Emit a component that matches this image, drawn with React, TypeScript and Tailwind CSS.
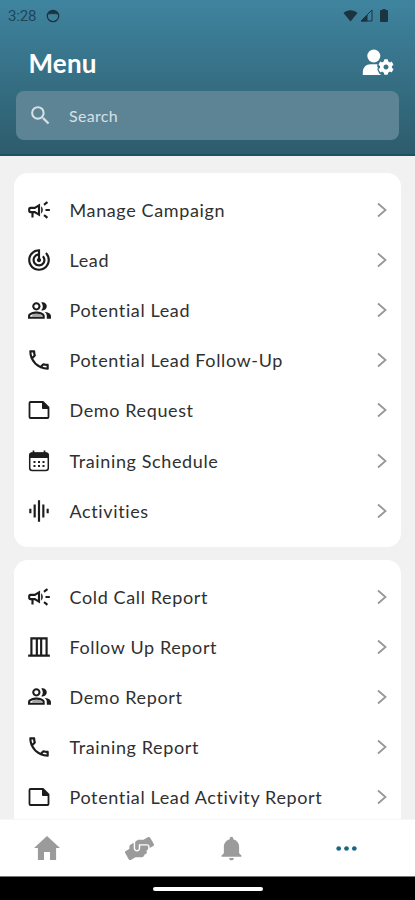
import React from "react";
import {
  MdOutlineCampaign,
  MdTrackChanges,
  MdOutlinePeopleAlt,
  MdOutlinePhone,
  MdOutlineCurtainsClosed,
  MdGraphicEq,
  MdSearch,
} from "react-icons/md";
import { IoEllipsisHorizontal } from "react-icons/io5";
import { IoMdHome, IoMdNotifications } from "react-icons/io";
import { FaHandsHelping, FaCog } from "react-icons/fa";

function NoteIcon() {
  return (
    <svg viewBox="0 0 22 18" className="h-[18px] w-[22px]" fill="none" stroke="currentColor" strokeWidth="1.8" strokeLinejoin="round">
      <path d="M2.500 1H15L20.500 6.500v9.500q0 1-1 1h-17q-1 0-1-1v-14q0-1 1-1z" />
      <path d="M14.500 1.500V7.500h6z" fill="currentColor" strokeWidth="1" />
    </svg>
  );
}

function CalendarIcon() {
  return (
    <svg viewBox="0 0 22 22" className="h-[22px] w-[22px]" fill="none" stroke="currentColor">
      <rect x="1.700" y="3" width="18.600" height="17.600" rx="2.500" strokeWidth="1.500" />
      <path d="M1.500 8V5q0-2.500 2.500-2.500h14q2.500 0 2.500 2.500v3z" fill="currentColor" stroke="none" />
      <path d="M5.500 .5v3M16.500 .5v3" strokeWidth="1.700" />
      <path d="M10 12h2M14.500 12h2M5.500 12h2M5.500 16h2M10 16h2M14.500 16h2" strokeWidth="2" />
    </svg>
  );
}

function UserSettingsIcon() {
  return (
    <span className="relative block h-[27px] w-[32px]">
      <svg viewBox="0 0 32 27" className="h-[27px] w-[32px]" fill="currentColor">
        <circle cx="11.800" cy="7" r="6.500" />
        <path d="M.8 26v-2.500C.8 18.500 4 15.300 8.500 15.300H15.500C14.800 17 15.300 18 16 18.600 15.200 20 15.200 21.500 16.300 22.500 16.600 24 18 25.500 19.500 26z" />
      </svg>
      <FaCog size={16} className="absolute top-[10px] left-[15.500px]" />
    </span>
  );
}

type Item = { label: string; icon: React.ReactNode };

const campaign = <MdOutlineCampaign size={26} />;
const people = (
  <span className="relative">
    <MdOutlinePeopleAlt size={25} />
    <span className="absolute bottom-[6px] left-[5px] h-[3px] w-[10px] rounded-t-full bg-[#a5a5a5]" />
  </span>
);
const phone = <MdOutlinePhone size={26} />;

const mainItems: Item[] = [
  { label: "Manage Campaign", icon: campaign },
  { label: "Lead", icon: <MdTrackChanges size={26} /> },
  { label: "Potential Lead", icon: people },
  { label: "Potential Lead Follow-Up", icon: phone },
  { label: "Demo Request", icon: <NoteIcon /> },
  { label: "Training Schedule", icon: <CalendarIcon /> },
  { label: "Activities", icon: <MdGraphicEq size={26} /> },
];

const reportItems: Item[] = [
  { label: "Cold Call Report", icon: campaign },
  { label: "Follow Up Report", icon: <MdOutlineCurtainsClosed size={26} /> },
  { label: "Demo Report", icon: people },
  { label: "Training Report", icon: phone },
  { label: "Potential Lead Activity Report", icon: <NoteIcon /> },
];

function MenuCard({ items }: { items: Item[] }) {
  return (
    <div className="shrink-0 rounded-[14px] bg-white pt-[12px] pb-[11px]">
      {items.map((item) => (
        <div key={item.label} className="flex h-[50.1px] items-center pr-[13.5px] pl-[12px] text-[#1c1c1c]">
          <span className="flex w-[26px] justify-center">{item.icon}</span>
          <span className="ml-[17.5px] flex-1 text-[18px] leading-6 tracking-[0.62px] whitespace-nowrap text-[#303030]">
            {item.label}
          </span>
          <svg viewBox="0 0 12 16" className="h-4 w-3" fill="none" stroke="#979797" strokeWidth="1.8">
            <path d="M2 1.5 9.500 8l-7.500 6.500" />
          </svg>
        </div>
      ))}
    </div>
  );
}

export default function App() {
  return (
    <div className="flex h-[900px] w-[415px] flex-col overflow-hidden bg-[#f1f1f1] font-['Lato',sans-serif]">
      <header className="h-[156px] shrink-0 border-b-2 border-[#1b5263] bg-linear-to-b from-[#3f849f] to-[#2d5c6c]">
        <div className="flex h-[31px] items-center justify-between pr-[27px] pl-[8px] text-[#1d4657]">
          <div className="flex items-center gap-[10px]">
            <span className="font-['Roboto',sans-serif] text-[15px] leading-5 tracking-[-0.2px]">3:28</span>
            <svg viewBox="0 0 14 14" className="h-[14px] w-[14px] text-[#1b3540]" fill="none" stroke="currentColor" strokeWidth="1.3">
              <circle cx="7" cy="7" r="5.7" />
              <path d="M2 5 4 2h6l2 3-2 .5-1-1-1 1-1-1-1 1-1-1-1 1z" fill="currentColor" stroke="none" />
            </svg>
          </div>
          <div className="flex items-center text-[#1b3540]">
            <svg viewBox="0 0 15 13" className="h-[13px] w-[15px]" fill="currentColor">
              <path d="M.5 4C4.5.2 10.500.2 14.500 4L7.500 12.500z" />
            </svg>
            <svg viewBox="0 0 13 13" className="ml-[2px] h-[13px] w-[13px]" fill="none" stroke="currentColor">
              <path d="M1 12 12 1v11z" />
              <path d="M1 12 7 6v6z" fill="currentColor" />
            </svg>
            <svg viewBox="0 0 8 13" className="ml-[7px] h-[13px] w-2" fill="currentColor">
              <path d="M2.500 0h3v1H7q1 0 1 1v10q0 1-1 1H1q-1 0-1-1V2q0-1 1-1h1.500z" />
            </svg>
          </div>
        </div>
        <div className="flex h-[60px] items-center justify-between pt-[3px] pr-[21px] pl-[28.5px] text-white">
          <h1 className="text-[26px] leading-8 font-bold tracking-[0.2px]">Menu</h1>
          <UserSettingsIcon />
        </div>
        <div className="mr-[16px] ml-[16px] flex h-[49px] items-center rounded-[8px] bg-[#5d8495] pl-[12px] text-[#d5e0e6]">
          <MdSearch size={25} />
          <span className="ml-[16px] text-[16px] tracking-[0.3px]">Search</span>
        </div>
      </header>
      <main className="flex min-h-0 flex-1 flex-col gap-[13px] overflow-hidden pt-[17px] pr-[14px] pl-[14px]">
        <MenuCard items={mainItems} />
        <MenuCard items={reportItems} />
      </main>
      <nav className="flex h-[57px] shrink-0 items-center border-t border-[#f7f7f7] bg-white pl-[1px] text-[#9b9b9b]">
        <span className="flex w-[92px] justify-center"><IoMdHome size={32} /></span>
        <span className="flex w-[92px] justify-center"><FaHandsHelping size={29} /></span>
        <span className="flex w-[92px] justify-center"><IoMdNotifications size={29} /></span>
        <span className="flex w-[138px] justify-center text-[#1c6480]"><IoEllipsisHorizontal size={25} /></span>
      </nav>
      <div className="flex h-[24px] shrink-0 items-center justify-center border-t border-[#777777] bg-black">
        <div className="h-1 w-[110px] rounded-full bg-white" />
      </div>
    </div>
  );
}
